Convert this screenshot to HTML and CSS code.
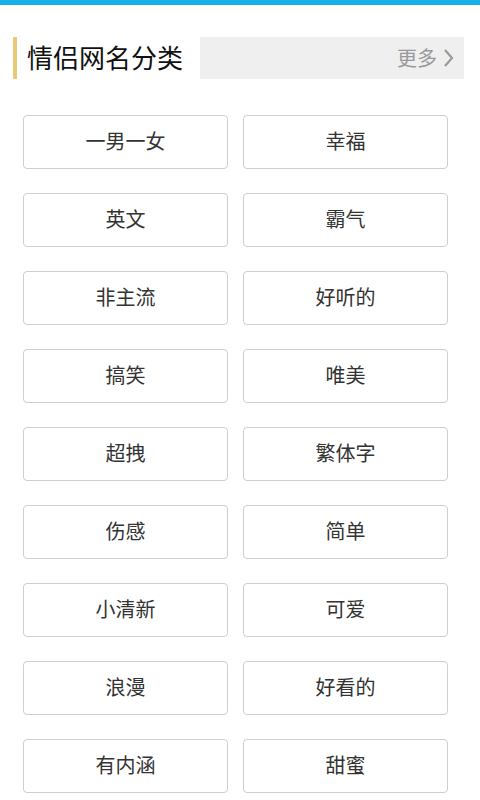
FILE: index.html
```html
<!DOCTYPE html>
<html lang="zh-CN">

<head>
    <meta charset="UTF-8">
    <meta name="viewport" content="width=device-width, initial-scale=1.0">
    <link rel="stylesheet" href="styles.css">
    <title>情侣网名分类</title>
</head>

<body>
    <div class="topBar"></div>
    <div class="head">
        <span class="mark"></span>
        <h2 class="title">情侣网名分类</h2>
        <div class="more">
            <span>更多</span>
            <svg class="arrow" width="11" height="20" viewBox="0 0 11 20">
                <polyline points="2,2 9,10 2,18" fill="none" stroke="#9a9a9a" stroke-width="2.2" />
            </svg>
        </div>
    </div>
    <ul class="tagList">
        <li>一男一女</li>
        <li>幸福</li>
        <li>英文</li>
        <li>霸气</li>
        <li>非主流</li>
        <li>好听的</li>
        <li>搞笑</li>
        <li>唯美</li>
        <li>超拽</li>
        <li>繁体字</li>
        <li>伤感</li>
        <li>简单</li>
        <li>小清新</li>
        <li>可爱</li>
        <li>浪漫</li>
        <li>好看的</li>
        <li>有内涵</li>
        <li>甜蜜</li>
    </ul>
</body>

</html>
```

FILE: styles.css
```css
* {
    padding: 0;
    margin: 0;
    list-style: none;
}

body {
    background: #fff;
    font-family: "Noto Sans CJK SC", "Noto Sans", sans-serif;
    color: #333;
}

.topBar {
    height: 5px;
    background: #17b0e6;
}

.head {
    display: flex;
    align-items: center;
    margin-top: 31px;
    padding-left: 13px;
    padding-right: 16px;
    height: 43px;
}

.head .mark {
    width: 4px;
    height: 42px;
    background: #e9c877;
}

.head .title {
    margin-left: 10px;
    font-size: 26px;
    font-weight: normal;
    color: #111;
    line-height: 43px;
    padding-bottom: 2px;
}

.head .more {
    flex: 1;
    height: 42px;
    margin-left: 17px;
    background: #efefef;
    display: flex;
    align-items: center;
    justify-content: flex-end;
    padding-right: 10px;
    font-size: 20px;
    color: #999;
}

.head .more .arrow {
    margin-left: 6px;
}

.tagList {
    display: grid;
    grid-template-columns: 1fr 1fr;
    column-gap: 15px;
    row-gap: 24px;
    margin-top: 36px;
    padding: 0 32px 0 23px;
}

.tagList li {
    box-sizing: border-box;
    height: 54px;
    border: 1px solid #cfcfcf;
    border-radius: 4px;
    display: flex;
    align-items: center;
    justify-content: center;
    padding-bottom: 3px;
    font-size: 20px;
    color: #333;
}
```
